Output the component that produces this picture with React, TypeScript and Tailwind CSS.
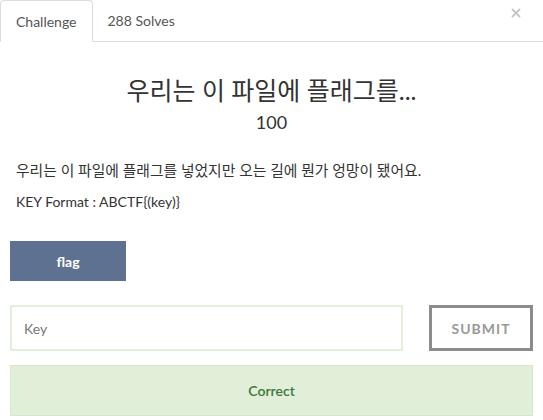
export default function App() {
  return (
    <div className="relative h-[420px] w-[543px] overflow-hidden bg-white font-['Lato','Noto_Sans_CJK_KR',sans-serif] text-[#333]">
      <button className="absolute right-[22px] top-[8px] text-[#c4c4c4]" aria-label="close">
        <svg width="10" height="10" viewBox="0 0 10 10">
          <path d="M1 1 L9 9 M9 1 L1 9" stroke="currentColor" strokeWidth="1.8" />
        </svg>
      </button>

      <div className="flex h-[42px] border-b border-[#ddd]">
        <div className="-mb-px flex h-[42px] items-center rounded-t-[4px] border border-[#ddd] border-b-white bg-white px-[15px] text-[14px] text-[#555]">
          Challenge
        </div>
        <div className="flex items-center px-[15px] text-[14px] text-[#555]">288 Solves</div>
      </div>

      <div className="px-[10px]">
        <h3 className="mt-[33px] text-center text-[25px] leading-[30px] text-[#333]">우리는 이 파일에 플래그를...</h3>
        <h4 className="mt-[6px] text-center text-[18px] leading-[22px] text-[#333]">100</h4>

        <div className="mt-[27px] px-[6px] text-[14px] leading-[20px]">
          <p className="text-[14.8px]">우리는 이 파일에 플래그를 넣었지만 오는 길에 뭔가 엉망이 됐어요.</p>
          <p className="mt-[12px]">KEY Format : ABCTF{"{(key)}"}</p>
        </div>

        <button className="mt-[29px] flex h-[40px] w-[116px] items-center justify-center bg-[#5f7190] text-[14px] font-bold text-white">
          flag
        </button>

        <div className="mt-[24px] flex gap-[26px]">
          <div className="flex h-[46px] flex-1 items-center border-2 border-[#e3efdb] px-[12px] text-[14px] text-[#777]">
            Key
          </div>
          <button className="flex h-[46px] w-[104px] items-center justify-center border-[3px] border-[#8c8c8c] text-[14px] font-bold tracking-[1px] text-[#999]">
            SUBMIT
          </button>
        </div>

        <div className="mt-[14px] flex h-[51px] items-center justify-center border border-[#d6e9c6] bg-[#e1eed8] text-[14px] font-semibold text-[#3c763d]">
          Correct
        </div>
      </div>
    </div>
  );
}
